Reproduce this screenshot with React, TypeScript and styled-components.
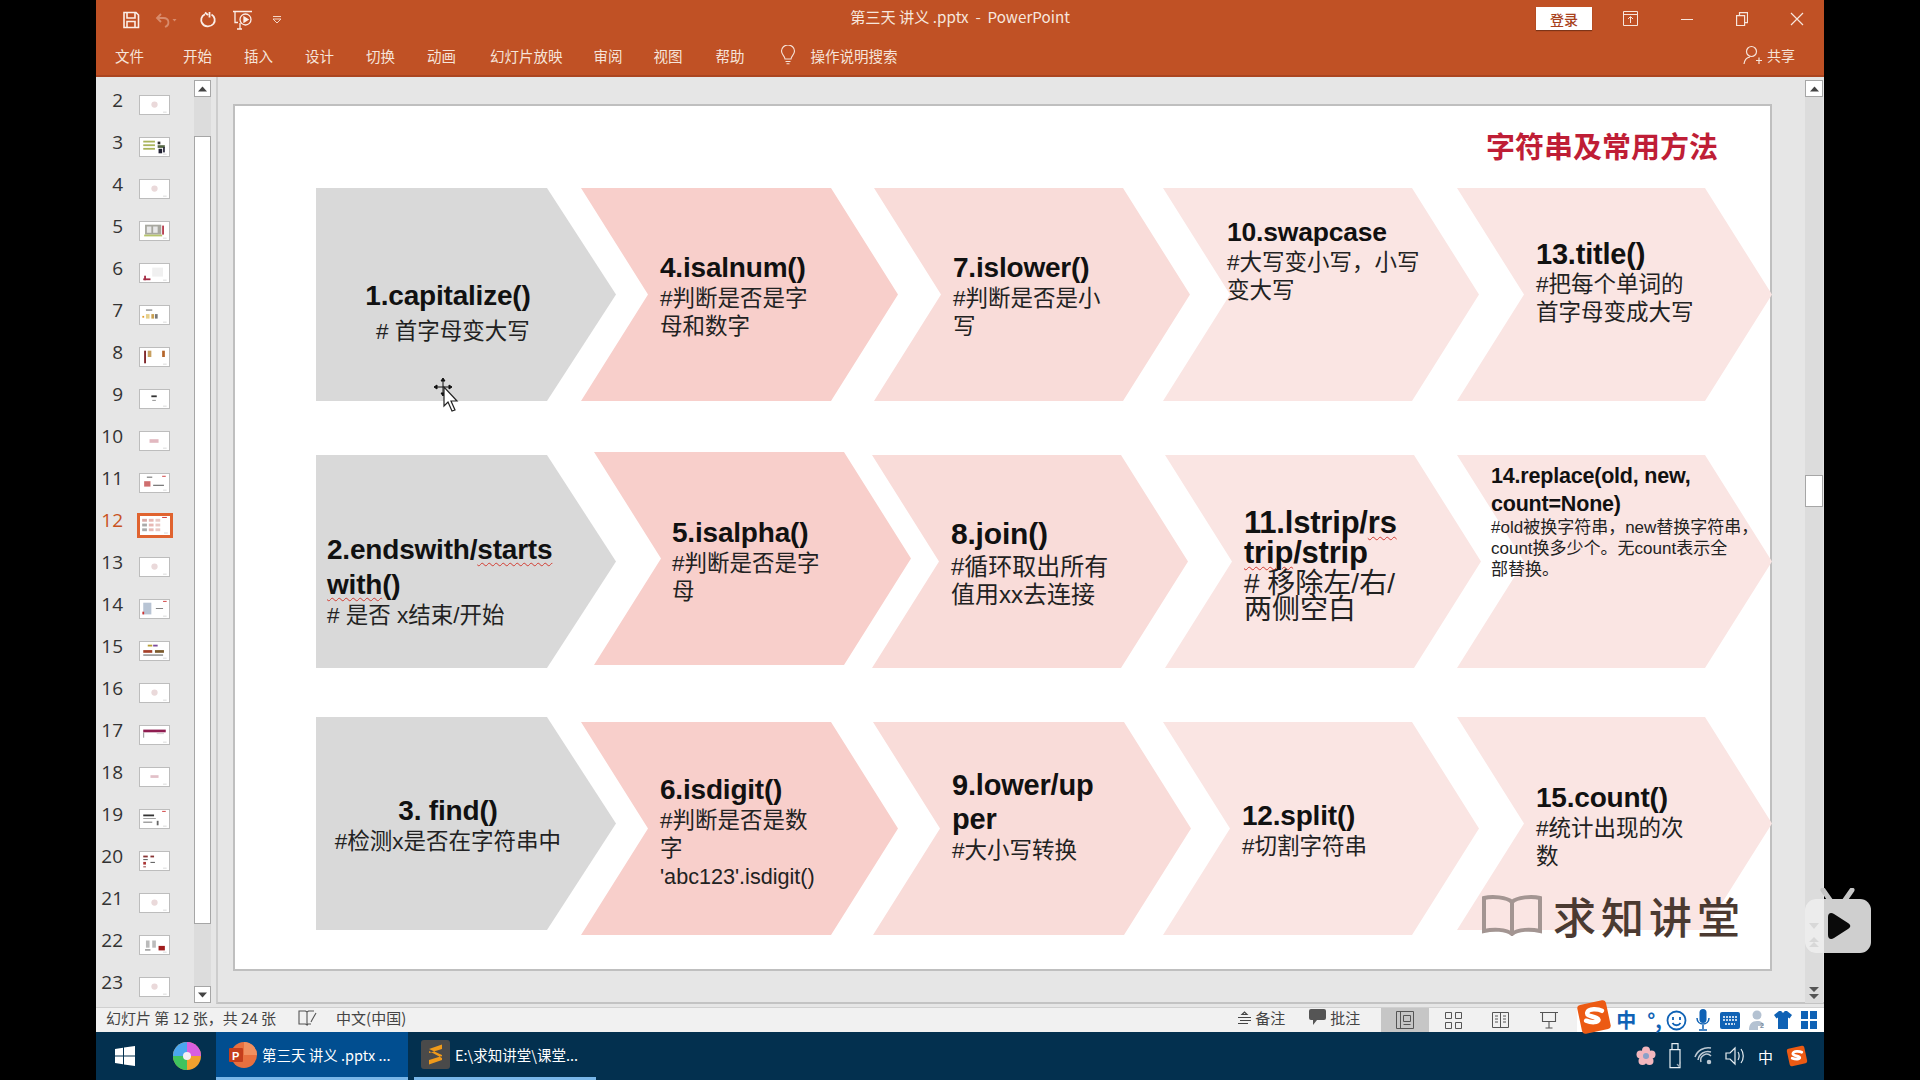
import React from "react";
import styled, { createGlobalStyle } from "styled-components";

const UI = `"Noto Sans CJK SC", "Liberation Sans", sans-serif`;
const SLIDE = `"Liberation Sans", "Noto Sans CJK SC", sans-serif`;

const Global = createGlobalStyle`
  html, body { margin: 0; padding: 0; background: #000; }
  * { box-sizing: border-box; }
`;

const Screen = styled.div`
  position: relative;
  width: 1920px;
  height: 1080px;
  padding: 0 96px;
  background: #000;
  overflow: hidden;
  font-family: ${UI};
`;
const Window = styled.div`
  width: 1728px;
  height: 1080px;
  display: flex;
  flex-direction: column;
  background: #e6e6e6;
`;

/* ---------- title bar ---------- */
const TitleBar = styled.header`
  height: 40px;
  flex: none;
  display: grid;
  grid-template-columns: 1fr auto 1fr;
  align-items: center;
  background: #c05125;
  color: #f7e6dd;
`;
const QuickAccess = styled.div`
  display: flex;
  align-items: center;
  padding-left: 26px;
  height: 40px;
  margin-top: -1px;
`;
const QuickIcon = styled.svg<{ $ml: number }>`
  margin-left: ${(p) => p.$ml}px;
  display: block;
  flex: none;
`;
const DocTitle = styled.div`
  font-size: 15.2px;
  margin-top: -8px;
  white-space: pre;
`;
const WindowControls = styled.div`
  display: flex;
  align-items: center;
  justify-content: flex-end;
  padding-right: 20px;
`;
const Login = styled.button`
  width: 56px;
  height: 23px;
  margin-top: -3px;
  border: 0;
  padding: 0;
  background: #fff;
  color: #a8411c;
  font: 500 14px ${UI};
  box-shadow: 0 1px 1px rgba(0, 0, 0, 0.35);
`;
const ControlIcon = styled.svg<{ $ml: number }>`
  margin-left: ${(p) => p.$ml}px;
  margin-top: -3px;
  display: block;
`;

/* ---------- ribbon tabs ---------- */
const Ribbon = styled.nav`
  height: 37px;
  flex: none;
  display: flex;
  align-items: center;
  padding: 0 29px 5px 19px;
  background: #c05125;
  border-bottom: 2px solid #ab4520;
  color: #f6e4da;
  font-size: 14.5px;
`;
const Tab = styled.span<{ $ml: number }>`
  margin-left: ${(p) => p.$ml}px;
  white-space: nowrap;
`;
const Bulb = styled.svg`
  margin-left: 35px;
  flex: none;
`;
const Share = styled.span`
  margin-left: auto;
  display: flex;
  align-items: center;
  gap: 5px;
  font-size: 14px;
`;

/* ---------- main ---------- */
const Main = styled.main`
  flex: 1;
  min-height: 0;
  display: flex;
`;
const ThumbPanel = styled.aside`
  width: 98px;
  flex: none;
  padding-top: 7px;
  overflow: hidden;
`;
const ThumbRow = styled.div`
  height: 42px;
  display: flex;
  align-items: flex-start;
`;
const ThumbNum = styled.span<{ $active: boolean }>`
  width: 27px;
  text-align: right;
  font: 19px/26px "Open Sans", sans-serif;
  color: ${(p) => (p.$active ? "#c9521f" : "#333")};
  margin-top: 3px;
  flex: none;
`;
const ThumbBox = styled.svg<{ $active: boolean }>`
  margin: ${(p) => (p.$active ? "9px 0 0 14px" : "11px 0 0 16px")};
  display: block;
  flex: none;
  background: #fff;
  border: ${(p) => (p.$active ? "3px solid #e0632f" : "1px solid #bdbdbd")};
`;
const ScrollColumn = styled.div<{ $w: number }>`
  width: ${(p) => p.$w}px;
  flex: none;
  display: flex;
  flex-direction: column;
  background: #dcdcdc;
  height: 923px;
  margin-top: 3px;
`;
const ScrollButton = styled.div`
  height: 17px;
  flex: none;
  display: flex;
  align-items: center;
  justify-content: center;
  background: #fff;
  border: 1px solid #a6a6a6;
  color: #444;
`;
const ScrollThumb = styled.div<{ $mt: number; $h: number }>`
  height: ${(p) => p.$h}px;
  margin-top: ${(p) => p.$mt}px;
  flex: none;
  background: #fff;
  border: 1px solid #a6a6a6;
`;
const ScrollSpacer = styled.div`
  flex: 1;
`;
const Stage = styled.section`
  flex: 1;
  min-width: 0;
  margin-left: 5px;
  border-left: 2px solid #cdcdcd;
  padding: 0 1px 0 15px;
  display: flex;
  height: 927px;
  border-bottom: 2px solid #c3c3c3;
  justify-content: space-between;
`;
const Slide = styled.div`
  position: relative;
  width: 1539px;
  height: 867px;
  margin-top: 27px;
  flex: none;
  background: #fff;
  border: 2px solid #bfbfbf;
  padding-left: 81px;
  display: flex;
  flex-direction: column;
`;
const SlideHeader = styled.div`
  height: 82px;
  flex: none;
  display: flex;
  justify-content: flex-end;
  padding: 23px 52px 0 0;
`;
const SlideTitle = styled.h1`
  margin: 0;
  font: 700 29px/38px ${SLIDE};
  color: #bf1e36;
  white-space: nowrap;
`;
const ChevronRow = styled.div<{ $mt: number }>`
  display: flex;
  height: 213px;
  margin-top: ${(p) => p.$mt}px;
  flex: none;
`;
const Chevron = styled.div<{ $ml: number; $mt: number; $w: number; $bg: string; $first: boolean; $pl: number; $pt: number }>`
  position: relative;
  flex: none;
  width: ${(p) => p.$w}px;
  height: 213px;
  margin-left: ${(p) => p.$ml}px;
  margin-top: ${(p) => p.$mt}px;
  padding: ${(p) => p.$pt}px 0 0 ${(p) => p.$pl}px;
  &::before {
    content: "";
    position: absolute;
    inset: 0;
    background: ${(p) => p.$bg};
    clip-path: ${(p) =>
      p.$first
        ? "polygon(0 0, calc(100% - 69px) 0, 100% 50%, calc(100% - 69px) 100%, 0 100%)"
        : "polygon(0 0, calc(100% - 67px) 0, 100% 50%, calc(100% - 67px) 100%, 0 100%, 67px 50%)"};
  }
`;
const ChevronText = styled.div<{ $center: boolean }>`
  position: relative;
  color: #111;
  white-space: nowrap;
  text-align: ${(p) => (p.$center ? "center" : "left")};
  width: ${(p) => (p.$center ? "264px" : "auto")};
`;
const MethodName = styled.div<{ $size: number; $lh: number }>`
  font: 700 ${(p) => p.$size}px/${(p) => p.$lh}px ${SLIDE};
  letter-spacing: -0.2px;
`;
const Note = styled.div<{ $size: number; $lh: number; $mt: number; $indent: number }>`
  font: 400 ${(p) => p.$size}px/${(p) => p.$lh}px ${SLIDE};
  margin-top: ${(p) => p.$mt}px;
  padding-left: ${(p) => p.$indent}px;
  color: #222;
`;
const Squiggle = styled.span`
  text-decoration: underline wavy #d23c32 1px;
  text-underline-offset: 3px;
`;
const LogoMark = styled.div`
  position: absolute;
  left: 1245px;
  top: 786px;
  display: flex;
  align-items: center;
  gap: 9px;
`;
const LogoText = styled.span`
  font: 500 43px/46px ${UI};
  letter-spacing: 5px;
  color: #4b3a31;
`;
const Pointer = styled.svg`
  position: absolute;
  left: 199px;
  top: 272px;
`;

/* ---------- status bar ---------- */
const StatusBar = styled.footer`
  height: 25px;
  flex: none;
  display: flex;
  align-items: stretch;
  margin-top: 4px;
  background: #f1f1f1;
  border-top: 1px solid #d0d0d0;
  color: #444;
  font-size: 15px;
`;
const StatusText = styled.span<{ $ml: number }>`
  margin-left: ${(p) => p.$ml}px;
  display: flex;
  align-items: center;
  gap: 4px;
  white-space: nowrap;
  padding-bottom: 6px;
`;
const ViewButton = styled.span<{ $ml: number; $w: number; $on: boolean }>`
  margin-left: ${(p) => p.$ml}px;
  width: ${(p) => p.$w}px;
  background: ${(p) => (p.$on ? "#c6c6c6" : "transparent")};
  display: flex;
  align-items: center;
  justify-content: center;
`;
const ImeBar = styled.div`
  position: relative;
  margin-left: 19px;
  flex: 1;
  display: flex;
  align-items: center;
  background: #fff;
`;
const SogouBig = styled.svg`
  margin-top: -7px;
  margin-left: -1px;
  display: block;
  flex: none;
`;
const ImeItem = styled.span<{ $ml: number }>`
  margin-left: ${(p) => p.$ml}px;
  display: flex;
  align-items: center;
  color: #0f62b5;
  font: 700 20px/24px ${UI};
`;

/* ---------- taskbar ---------- */
const Taskbar = styled.div`
  height: 48px;
  flex: none;
  display: flex;
  align-items: center;
  background: #03304f;
  color: #fff;
  padding-right: 16px;
`;
const StartIcon = styled.svg`
  margin-left: 19px;
  display: block;
  flex: none;
`;
const BallIcon = styled.svg`
  margin-left: 37px;
  display: block;
  flex: none;
`;
const TaskItem = styled.div<{ $ml: number; $w: number; $active: boolean }>`
  margin-left: ${(p) => p.$ml}px;
  width: ${(p) => p.$w}px;
  height: 48px;
  flex: none;
  display: flex;
  align-items: center;
  gap: 5px;
  padding: 0 0 0 8px;
  font-size: 14.5px;
  white-space: nowrap;
  background: ${(p) => (p.$active ? "#014e90" : "transparent")};
  border-bottom: 3px solid #79b6e8;
`;
const Tray = styled.div`
  margin-left: auto;
  display: flex;
  align-items: center;
  gap: 13px;
  font-size: 15px;
`;

/* ---------- floating player ---------- */
const Player = styled.svg`
  position: absolute;
  left: 1804px;
  top: 888px;
`;
const Chevrons = styled.svg`
  display: block;
  margin: 0 auto 3px;
`;

type Shape = {
  ml: number;
  mt?: number;
  w: number;
  bg: string;
  pl: number;
  pt: number;
  title: React.ReactNode[];
  notes: string[];
  first?: boolean;
  size?: number;
  lh?: number;
  nSize?: number;
  nLh?: number;
  gap?: number;
  center?: boolean;
  indent?: number;
  lastSize?: number;
};

const GREY = "#d9d9d9";
const P1 = "#f8cfcb";
const P2 = "#f9dcd9";
const P3 = "#fae5e3";

const rows: { mt: number; shapes: Shape[] }[] = [
  {
    mt: 0,
    shapes: [
      { ml: 0, w: 300, bg: GREY, pl: 0, pt: 91, first: true, center: true, gap: 5, indent: 10, title: ["1.capitalize()"], notes: ["# 首字母变大写"] },
      { ml: -35, w: 317, bg: P1, pl: 79, pt: 63, title: ["4.isalnum()"], notes: ["#判断是否是字", "母和数字"] },
      { ml: -24, w: 316, bg: P2, pl: 79, pt: 63, title: ["7.islower()"], notes: ["#判断是否是小", "写"] },
      { ml: -27, w: 316, bg: P3, pl: 64, pt: 27, size: 26.5, title: ["10.swapcase"], notes: ["#大写变小写，小写", "变大写"] },
      { ml: -22, w: 315, bg: P3, pl: 79, pt: 49, size: 29, title: ["13.title()"], notes: ["#把每个单词的", "首字母变成大写"] },
    ],
  },
  {
    mt: 54,
    shapes: [
      { ml: 0, w: 300, bg: GREY, pl: 11, pt: 77, first: true, lh: 35, gap: 0, title: [<>2.endswith/<Squiggle>starts</Squiggle></>, <><Squiggle>with</Squiggle>()</>], notes: ["# 是否 x结束/开始"] },
      { ml: -22, mt: -3, w: 317, bg: P1, pl: 78, pt: 64, title: ["5.isalpha()"], notes: ["#判断是否是字", "母"] },
      { ml: -39, w: 316, bg: P2, pl: 79, pt: 62, gap: 2, size: 30, nSize: 24, title: ["8.join()"], notes: ["#循环取出所有", "值用xx去连接"] },
      { ml: -23, w: 316, bg: P3, pl: 79, pt: 53, size: 31, lh: 30, nSize: 28, nLh: 26, gap: 3, title: [<>11.lstrip/<Squiggle>rs</Squiggle></>, <><Squiggle>trip</Squiggle>/strip</>], notes: ["# 移除左/右/", "两侧空白"] },
      { ml: -24, w: 315, bg: P3, pl: 34, pt: 7, size: 21.5, lh: 28, nSize: 17, nLh: 21, gap: -1, title: ["14.replace(old, new,", "count=None)"], notes: ["#old被换字符串，new替换字符串，", "count换多少个。无count表示全", "部替换。"] },
    ],
  },
  {
    mt: 49,
    shapes: [
      { ml: 0, w: 300, bg: GREY, pl: 0, pt: 77, first: true, center: true, gap: 0, title: ["3. find()"], notes: ["#检测x是否在字符串中"] },
      { ml: -35, mt: 5, w: 317, bg: P1, pl: 79, pt: 51, gap: 0, lastSize: 21.6, title: ["6.isdigit()"], notes: ["#判断是否是数", "字", "'abc123'.isdigit()"] },
      { ml: -25, mt: 5, w: 318, bg: P2, pl: 79, pt: 46, gap: 1, size: 29, title: ["9.lower/up", "per"], notes: ["#大小写转换"] },
      { ml: -28, mt: 5, w: 316, bg: P3, pl: 79, pt: 77, gap: 0, title: ["12.split()"], notes: ["#切割字符串"] },
      { ml: -22, w: 315, bg: P3, pl: 79, pt: 64, gap: 0, title: ["15.count()"], notes: ["#统计出现的次", "数"] },
    ],
  },
];

const section = [[12, 6, 6, 6, "#ead9da"]];
const thumbs: Record<number, (string | number)[][]> = {
  2: section,
  3: [[3, 3, 13, 2, "#a9b45a"], [3, 7, 13, 2, "#a9b45a"], [3, 11, 13, 2, "#a9b45a"], [19, 4, 3, 3, "#333"], [19, 8, 8, 3, "#564"], [20, 12, 4, 5, "#223"], [25, 10, 2, 6, "#334"]],
  4: section,
  5: [[5, 3, 18, 11, "#a8a8a0"], [7, 5, 5, 7, "#e8e8e8"], [14, 5, 5, 7, "#e8e8e8"], [4, 14, 20, 2, "#b6c46c"], [24, 4, 2, 10, "#b63a4a"]],
  6: [[4, 13, 2, 5, "#a42c44"], [3, 16, 8, 2, "#a42c44"], [13, 4, 12, 10, "#f0f0f0"]],
  7: [[6, 4, 7, 1, "#555"], [6, 9, 4, 5, "#e6cf8a"], [12, 9, 3, 5, "#c9a050"], [16, 9, 3, 5, "#777"], [2, 11, 2, 2, "#e0a030"]],
  8: [[4, 3, 2, 14, "#7a1f22"], [8, 3, 4, 7, "#c8a060"], [24, 3, 3, 7, "#b5652b"]],
  9: [[12, 6, 6, 2, "#333"], [13, 11, 4, 1, "#888"]],
  10: [[10, 8, 10, 4, "#e2b8c0"]],
  11: [[7, 3, 6, 1, "#555"], [4, 8, 7, 6, "#cf6e6e"], [14, 12, 12, 1, "#444"], [24, 2, 4, 1, "#c33"]],
  12: [[2, 3, 5, 3, "#d9a9a5"], [9, 3, 5, 3, "#e8b8b4"], [16, 3, 5, 3, "#e8c8c4"], [2, 8, 5, 3, "#aaa"], [9, 8, 5, 3, "#e8b8b4"], [16, 8, 5, 3, "#e8c8c4"], [2, 13, 5, 3, "#aaa"], [9, 13, 5, 3, "#e8b8b4"], [16, 13, 5, 3, "#e8c8c4"], [23, 1, 5, 1, "#c33"]],
  13: section,
  14: [[3, 3, 9, 13, "#b8c4d4"], [2, 13, 2, 3, "#c33"], [17, 9, 8, 1, "#777"], [25, 1, 4, 1, "#c33"]],
  15: [[8, 3, 5, 2, "#b9a034"], [14, 3, 5, 2, "#7b4a9c"], [3, 9, 10, 3, "#a5402a"], [16, 9, 10, 3, "#7b5a2c"], [3, 14, 22, 1, "#444"]],
  16: section,
  17: [[3, 4, 25, 3, "#8f1d50"], [3, 7, 1, 6, "#888"], [18, 8, 8, 1, "#ccc"]],
  18: [[11, 8, 9, 3, "#e2c0c8"]],
  19: [[3, 5, 12, 2, "#333"], [3, 9, 14, 1, "#999"], [3, 13, 10, 1, "#666"], [18, 12, 2, 5, "#666"], [24, 1, 4, 1, "#c33"]],
  20: [[3, 4, 5, 2, "#833"], [11, 4, 4, 2, "#833"], [3, 8, 5, 1, "#444"], [3, 11, 3, 3, "#a33"], [11, 11, 5, 1, "#444"], [3, 16, 3, 1, "#833"]],
  21: section,
  22: [[6, 5, 4, 8, "#bbb"], [13, 5, 4, 8, "#bbb"], [20, 11, 7, 5, "#a01c1c"], [5, 15, 6, 1, "#555"]],
  23: section,
};

const Thumb = ({ n }: { n: number }) => {
  const active = n === 12;
  return (
    <ThumbRow>
      <ThumbNum $active={active}>{n}</ThumbNum>
      <ThumbBox $active={active} width={active ? 36 : 31} height={active ? 25 : 20} viewBox="0 0 31 20">
        {thumbs[n].map(([x, y, w, h, c], i) =>
          thumbs[n] === section ? (
            <circle key={i} cx={15.5} cy={9.5} r={3.5} fill={c as string} />
          ) : (
            <rect key={i} x={x} y={y} width={w} height={h} fill={c as string} />
          )
        )}
        <rect x={25} y={17.5} width={4} height={0.8} fill="#ccc" />
      </ThumbBox>
    </ThumbRow>
  );
};

const Caret = ({ up }: { up: boolean }) => (
  <svg width="9" height="6" viewBox="0 0 9 6">
    <path d={up ? "M0 5.5 4.5 .5 9 5.5Z" : "M0 .5 4.5 5.5 9 .5Z"} fill="#444" />
  </svg>
);

const SogouS = () => (
  <>
    <rect x="3" y="3" width="26" height="26" rx="3" transform="rotate(-12 16 16)" fill="#ec5a13" />
    <path d="M23 10.5c-3-1.6-12-2.6-13 1.8-.8 3.8 9.500 3 10 6.200.3 2.300-6 2.800-11 .8" fill="none" stroke="#fff" strokeWidth="4" strokeLinecap="round" />
  </>
);

const tabs: [string, number][] = [
  ["文件", 0], ["开始", 39], ["插入", 32], ["设计", 32], ["切换", 32], ["动画", 32], ["幻灯片放映", 34], ["审阅", 31], ["视图", 31], ["帮助", 33],
];

export default function App() {
  const nums = Array.from({ length: 22 }, (_, i) => i + 2);
  return (
    <Screen>
      <Global />
      <Window>
        <TitleBar>
          <QuickAccess>
            <QuickIcon $ml={0} width="18" height="18" viewBox="0 0 18 18" fill="none" stroke="#fbeee8" strokeWidth="1.6">
              <path d="M2 1.5h12l2.5 2.5v12.500H2z" />
              <path d="M5 1.500v5.500h8V1.500M5 16.500v-6h8v6" />
            </QuickIcon>
            <QuickIcon $ml={14} width="24" height="18" viewBox="0 0 24 18" fill="none" stroke="#d88b6c" strokeWidth="1.800">
              <path d="M7 3 3 7l4 4M3 7h6.500c6 0 6.500 7 1.500 9" />
              <path d="M18.500 8h4l-2 2.500z" fill="#d88b6c" stroke="none" />
            </QuickIcon>
            <QuickIcon $ml={21} width="18" height="18" viewBox="0 0 18 18" fill="none" stroke="#fbeee8" strokeWidth="1.800">
              <path d="M6 3.200C2 5 1.500 9 3 12c2 4 8.500 4.500 11.500.8 2.300-3.200 1.300-7.300-2-9.300M10.500 1v5.500M6 1.500 9 4" />
            </QuickIcon>
            <QuickIcon $ml={15} width="22" height="20" viewBox="0 0 22 20" fill="none" stroke="#fbeee8" strokeWidth="1.300">
              <path d="M1 1.500h19M3 1.500v11h3M10 19H5M8 13v6" />
              <circle cx="13.500" cy="9.500" r="5.500" />
              <path d="M12 7l4 2.500-4 2.500z" fill="#fbeee8" />
            </QuickIcon>
            <QuickIcon $ml={17} width="12" height="10" viewBox="0 0 12 10" fill="none" stroke="#f4d6c7" strokeWidth="1">
              <path d="M2 1.500h8M2 4l4 4 4-4z" />
            </QuickIcon>
          </QuickAccess>
          <DocTitle>{"第三天 讲义 .pptx  -  PowerPoint"}</DocTitle>
          <WindowControls>
            <Login>登录</Login>
            <ControlIcon $ml={30} width="17" height="17" viewBox="0 0 17 17" fill="none" stroke="#f7e6dd">
              <path d="M1.500 1.500h14v14h-14zM1.500 4.500h14M8.500 13V7M6 9l2.500-2.500L11 9" />
            </ControlIcon>
            <ControlIcon $ml={42} width="12" height="12" viewBox="0 0 12 12" stroke="#f7e6dd">
              <path d="M0 6.500h12" />
            </ControlIcon>
            <ControlIcon $ml={43} width="12" height="14" viewBox="0 0 12 14" fill="none" stroke="#f7e6dd" strokeWidth="1.200">
              <path d="M.6 3.600h8v10h-8zM3.500 3.500V.6h8v10H8.500" />
            </ControlIcon>
            <ControlIcon $ml={42} width="14" height="14" viewBox="0 0 14 14" stroke="#f7e6dd" strokeWidth="1.200">
              <path d="M1 1l12 12M13 1 1 13" />
            </ControlIcon>
          </WindowControls>
        </TitleBar>
        <Ribbon>
          {tabs.map(([t, ml]) => (
            <Tab key={t} $ml={ml}>{t}</Tab>
          ))}
          <Bulb width="16" height="20" viewBox="0 0 16 20" fill="none" stroke="#f6e4da" strokeWidth="1.100">
            <path d="M5 14c0-3-3.500-4-3.500-8a6.500 6 0 0 1 13 0c0 4-3.500 5-3.500 8zM5.500 16.500h5M6.500 18.800h3" />
          </Bulb>
          <Tab $ml={15}>操作说明搜索</Tab>
          <Share>
            <svg width="19" height="20" viewBox="0 0 19 20" fill="none" stroke="#f6e4da" strokeWidth="1.200">
              <circle cx="8.500" cy="6.500" r="5" />
              <path d="M1 19c.5-4 2.500-6.500 6-7M13 15.500h6M16 12.500v6.500" />
            </svg>
            共享
          </Share>
        </Ribbon>
        <Main>
          <ThumbPanel>
            {nums.map((n) => (
              <Thumb key={n} n={n} />
            ))}
          </ThumbPanel>
          <ScrollColumn $w={17}>
            <ScrollButton><Caret up /></ScrollButton>
            <ScrollThumb $mt={39} $h={788} />
            <ScrollSpacer />
            <ScrollButton><Caret up={false} /></ScrollButton>
          </ScrollColumn>
          <Stage>
            <Slide>
              <SlideHeader>
                <SlideTitle>字符串及常用方法</SlideTitle>
              </SlideHeader>
              {rows.map((row, r) => (
                <ChevronRow key={r} $mt={row.mt}>
                  {row.shapes.map((s, i) => (
                    <Chevron key={i} $ml={s.ml} $mt={s.mt ?? 0} $w={s.w} $bg={s.bg} $first={!!s.first} $pl={s.pl} $pt={s.pt}>
                      <ChevronText $center={!!s.center}>
                        {s.title.map((t, j) => (
                          <MethodName key={j} $size={s.size ?? 28} $lh={s.lh ?? 34}>{t}</MethodName>
                        ))}
                        {s.notes.map((n, j) => (
                          <Note
                            key={j}
                            $size={s.lastSize && j === s.notes.length - 1 ? s.lastSize : s.nSize ?? 22.5}
                            $lh={s.nLh ?? 28}
                            $mt={j === 0 ? s.gap ?? 0 : 0}
                            $indent={s.indent ?? 0}
                          >
                            {n}
                          </Note>
                        ))}
                      </ChevronText>
                    </Chevron>
                  ))}
                </ChevronRow>
              ))}
              <LogoMark>
                <svg width="64" height="42" viewBox="0 0 64 42" fill="none" stroke="#a39592" strokeWidth="4">
                  <path d="M32 8C27 3 12 2 4 4v33c9-2 22-2 28 3 6-5 19-5 28-3V4c-8-2-23-1-28 4zM32 8v32" />
                </svg>
                <LogoText>求知讲堂</LogoText>
              </LogoMark>
              <Pointer width="28" height="36" viewBox="0 0 28 36">
                <path d="M9 2v14M2 9h14M9 0 7 3h4zM9 18l-2-3h4zM0 9l3-2v4zM18 9l-3-2v4z" stroke="#111" fill="#111" strokeWidth="1" />
                <path d="M10 9v19l4-4 4 9 3-1-4-9h6z" fill="#fff" stroke="#222" strokeWidth="1.200" />
              </Pointer>
            </Slide>
            <ScrollColumn $w={18}>
              <ScrollButton><Caret up /></ScrollButton>
              <ScrollThumb $mt={378} $h={32} />
              <ScrollSpacer />
              <Chevrons width="12" height="14" viewBox="0 0 12 14" fill="#555">
                <path d="M1 1h10L6 6zM1 8h10l-5 5z" />
              </Chevrons>
            </ScrollColumn>
          </Stage>
        </Main>
        <StatusBar>
          <StatusText $ml={10}>幻灯片 第 12 张，共 24 张</StatusText>
          <StatusText $ml={22}>
            <svg width="19" height="17" viewBox="0 0 19 17" fill="none" stroke="#555" strokeWidth="1.100">
              <path d="M1 2h6.500l1.500 1v13L7.500 15H1zM9 3l1.500-1H16M9 16l1-1h3M14 11l4-7M13 13l1-2" />
            </svg>
          </StatusText>
          <StatusText $ml={19}>中文(中国)</StatusText>
          <StatusText $ml={832}>
            <svg width="13" height="16" viewBox="0 0 13 16" fill="none" stroke="#444" strokeWidth="1.200">
              <path d="M4 5.500 6.500 3 9 5.500zM0 8.500h13M2 11.500h11M0 14.500h10" />
            </svg>
            备注
          </StatusText>
          <StatusText $ml={24}>
            <svg width="17" height="16" viewBox="0 0 17 16" fill="#555">
              <path d="M2 0h13a2 2 0 0 1 2 2v7a2 2 0 0 1-2 2H8l-4 5v-5H2a2 2 0 0 1-2-2V2a2 2 0 0 1 2-2z" />
            </svg>
            批注
          </StatusText>
          <ViewButton $ml={21} $w={48} $on>
            <svg width="18" height="18" viewBox="0 0 18 18" fill="none" stroke="#555">
              <path d="M.5.500h17v17H.5zM4.500.500v17M7.500 4.500h7v6h-7zM7.500 13.500h7" />
            </svg>
          </ViewButton>
          <ViewButton $ml={16} $w={17} $on={false}>
            <svg width="17" height="17" viewBox="0 0 17 17" fill="none" stroke="#555">
              <path d="M.5.500h6v6h-6zM10.500.500h6v6h-6zM.5 10.500h6v6h-6zM10.500 10.500h6v6h-6z" />
            </svg>
          </ViewButton>
          <ViewButton $ml={30} $w={17} $on={false}>
            <svg width="17" height="18" viewBox="0 0 17 18" fill="none" stroke="#555">
              <path d="M.5 1.500h16v15H.5zM8.500 1.500v15M3 5h3M3 8h3M3 11h3M11 5h3M11 8h3M11 11h3" />
            </svg>
          </ViewButton>
          <ViewButton $ml={31} $w={18} $on={false}>
            <svg width="18" height="18" viewBox="0 0 18 18" fill="none" stroke="#555" strokeWidth="1.100">
              <path d="M0 1.500h18M2.500 1.500h13v9h-13zM9 10.500v6M5.500 17h7" />
            </svg>
          </ViewButton>
          <ImeBar>
            <SogouBig width="36" height="36" viewBox="0 0 32 32">
              <SogouS />
            </SogouBig>
            <ImeItem $ml={4}>中</ImeItem>
            <ImeItem $ml={11}>°,</ImeItem>
            <ImeItem $ml={4}>
              <svg width="21" height="21" viewBox="0 0 21 21" fill="none" stroke="#0f62b5" strokeWidth="1.800">
                <circle cx="10.500" cy="10.500" r="9" />
                <path d="M7 7v3M14 7v3M6.500 13c2 3 6 3 8 0" />
              </svg>
            </ImeItem>
            <ImeItem $ml={9}>
              <svg width="14" height="22" viewBox="0 0 14 22" fill="#0f62b5">
                <rect x="3.500" y="0" width="7" height="14" rx="3.500" />
                <path d="M1 9c0 8 12 8 12 0M7 16v4M3 21h8" fill="none" stroke="#0f62b5" strokeWidth="1.500" />
              </svg>
            </ImeItem>
            <ImeItem $ml={10}>
              <svg width="20" height="17" viewBox="0 0 20 17">
                <rect width="20" height="17" rx="2" fill="#0f62b5" />
                <path d="M3 5h14M3 8h14M5 12h10" stroke="#fff" strokeWidth="1.500" strokeDasharray="2 1" />
              </svg>
            </ImeItem>
            <ImeItem $ml={9}>
              <svg width="18" height="20" viewBox="0 0 18 20" fill="#b4c2d2">
                <circle cx="8" cy="5" r="4.500" />
                <path d="M0 20c0-6 3-9 8-9s6 2 7 5H9v4z" />
                <text x="11" y="18" fontSize="7" fill="#7b8ea3" fontFamily="Liberation Sans">2</text>
              </svg>
            </ImeItem>
            <ImeItem $ml={7}>
              <svg width="18" height="18" viewBox="0 0 18 18" fill="#0f62b5">
                <path d="M5 0h2.500c0 2 3 2 3 0H13l5 4-2.500 3.500L14 6.500V18H4V6.500L2.500 7.500 0 4z" />
              </svg>
            </ImeItem>
            <ImeItem $ml={9}>
              <svg width="16" height="18" viewBox="0 0 16 18" fill="#0f62b5">
                <path d="M0 0h7v8H0zM9 0h7v8H9zM0 10h7v8H0zM9 10h7v8H9z" />
              </svg>
            </ImeItem>
          </ImeBar>
        </StatusBar>
        <Taskbar>
          <StartIcon width="20" height="20" viewBox="0 0 20 20" fill="#fff">
            <path d="M0 3l8-1.200V9.500H0zM9 1.600 20 0v9.500H9zM0 10.500h8v7.700L0 17zM9 10.500h11V20L9 18.400z" />
          </StartIcon>
          <BallIcon width="30" height="30" viewBox="0 0 30 30">
            <circle cx="15" cy="15" r="14" fill="#f2a12e" />
            <path d="M15 1a14 14 0 0 1 14 14H15z" fill="#d85fe0" />
            <path d="M1 15A14 14 0 0 1 15 1v14z" fill="#4aa6ef" />
            <path d="M1 15a14 14 0 0 0 14 14V15z" fill="#3fc35f" />
            <circle cx="15" cy="15" r="4" fill="#f4eef4" />
          </BallIcon>
          <TaskItem $ml={14} $w={192} $active>
            <svg width="30" height="30" viewBox="0 0 30 30" style={{ marginLeft: 3, flex: "none" }}>
              <circle cx="17" cy="15" r="13" fill="#e8703f" />
              <path d="M17 2a13 13 0 0 1 13 13H17z" fill="#f09060" />
              <rect x="2" y="8" width="14" height="14" rx="1" fill="#c43e1c" />
              <text x="5" y="19.500" fontSize="11" fontWeight="700" fill="#fff" fontFamily="Liberation Sans">P</text>
            </svg>
            第三天 讲义 .pptx ...
          </TaskItem>
          <TaskItem $ml={6} $w={182} $active={false}>
            <svg width="29" height="29" viewBox="0 0 29 29" style={{ marginLeft: -1, flex: "none" }}>
              <rect width="29" height="29" rx="3" fill="#4a4a4a" />
              <path d="M8 13V9l13-4.500v4.500zM21 16v4l-13 4.500V20zM8 11l13 7v-3L8 9z" fill="#f09a1a" />
            </svg>
            E:\求知讲堂\课堂...
          </TaskItem>
          <Tray>
            <svg width="20" height="20" viewBox="0 0 20 20">
              <circle cx="10" cy="4.500" r="4" fill="#f3b6bd" />
              <circle cx="4.500" cy="8.500" r="4" fill="#f3b6bd" />
              <circle cx="15.500" cy="8.500" r="4" fill="#f3b6bd" />
              <circle cx="6.500" cy="15" r="4" fill="#f3b6bd" />
              <circle cx="13.500" cy="15" r="4" fill="#f3b6bd" />
              <circle cx="10" cy="10" r="3" fill="#8aa0c8" />
            </svg>
            <svg width="12" height="26" viewBox="0 0 12 26" fill="none" stroke="#e8eef2" strokeWidth="1.200">
              <path d="M3 .6h6v6H3zM1 6.600h10v18H1z" />
              <path d="M8 21l1.500 2 3-5" stroke="#9fb0bd" />
            </svg>
            <svg width="18" height="20" viewBox="0 0 18 20" fill="none" stroke="#bcc8d2" strokeWidth="1.500">
              <path d="M1 11A14 14 0 0 1 17 2M4 14a10 10 0 0 1 13-8M7 16a6 6 0 0 1 10-6" />
              <circle cx="15" cy="16" r="1.500" fill="#bcc8d2" />
            </svg>
            <svg width="20" height="22" viewBox="0 0 20 22" fill="none" stroke="#e8eef2" strokeWidth="1.200">
              <path d="M1 8h4l5-5v16l-5-5H1zM13 7c1.500 2 1.500 6 0 8M16 4c3 4 3 10 0 14" />
            </svg>
            <span>中</span>
            <svg width="22" height="22" viewBox="0 0 32 32">
              <SogouS />
            </svg>
          </Tray>
        </Taskbar>
      </Window>
      <Player width="68" height="68" viewBox="0 0 68 68">
        <path d="M19 2 26 12M48 2 41 12" stroke="#c6c6c6" strokeWidth="5" strokeLinecap="round" />
        <rect x="1" y="11" width="66" height="54" rx="11" fill="#cfcfcf" />
        <path d="M12 11h8v54h-8A11 11 0 0 1 1 54V22A11 11 0 0 1 12 11z" fill="#ececec" />
        <path d="M5 35h10l-5 6zM5 54l5-5 5 5zM5 59l5-5 5 5z" fill="#d8d8d8" />
        <path d="M24 29c0-4 3-5 6-3l14 9c3 2 3 4 0 6L30 50c-3 2-6 1-6-3z" fill="#0a0a0a" />
      </Player>
    </Screen>
  );
}
